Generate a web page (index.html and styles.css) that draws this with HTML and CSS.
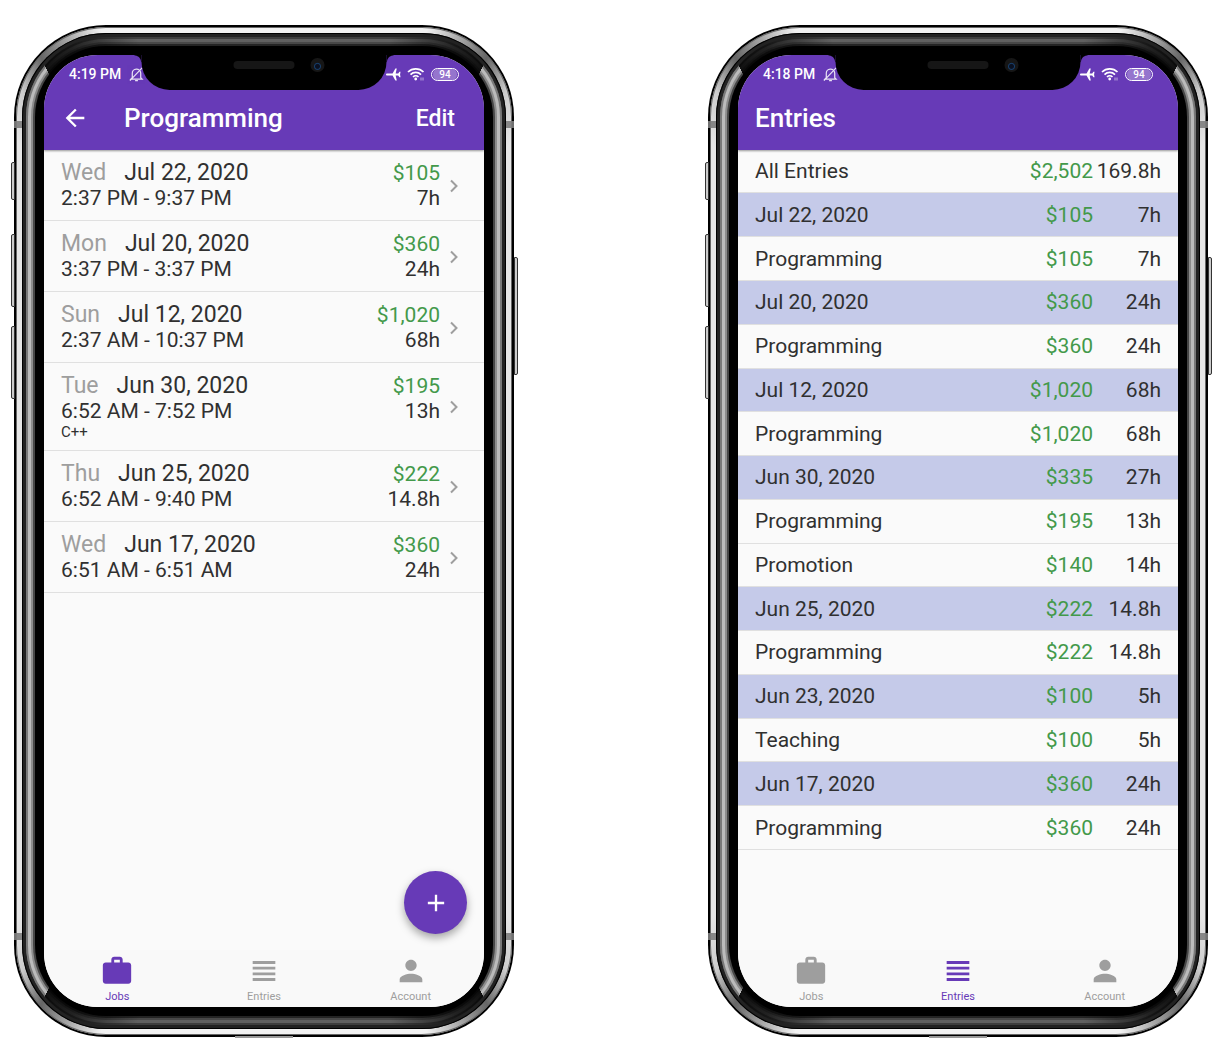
FILE: index.html
```html
<!DOCTYPE html>
<html lang="en">
<head>
<meta charset="utf-8">
<meta name="viewport" content="width=device-width, initial-scale=1">
<title>Time Tracker</title>
<link rel="stylesheet" href="styles.css">
</head>
<body>
<svg class="sprite" aria-hidden="true">
  <symbol id="bell-off" viewBox="0 0 16 16"><path d="M3.500 11.500V7a4.500 4.500 0 0 1 9-.5v5l1.500 1.500H2z M6.500 14.500h3M14 1L1 14.500" fill="none" stroke="currentColor" stroke-width="1.300"/></symbol>
  <symbol id="plane" viewBox="0 0 16 16"><path d="M0 8c0-.7.6-1.100 1.300-1.100H7L10 1.500h1.500L10.300 6.900H13l1.300-1.900h1.200L15 8l.5 3h-1.200L13 9.100h-2.700l1.200 5.400H10L7 9.100H1.300C.6 9.100 0 8.700 0 8z" fill="currentColor"/></symbol>
  <symbol id="wifi" viewBox="0 0 18 14"><path d="M1 5a11 11 0 0 1 15.500 0M3.500 7.600a7.500 7.500 0 0 1 10.500 0M6 10a4 4 0 0 1 5.500 0" fill="none" stroke="currentColor" stroke-width="1.700"/><circle cx="8.700" cy="12" r="1.400" fill="currentColor"/><path d="M14 10.500v3M16 10.500v3" stroke="currentColor" opacity=".6"/></symbol>
  <symbol id="back" viewBox="0 0 24 24"><path d="M20 11H7.830l5.590-5.590L12 4l-8 8 8 8 1.410-1.410L7.830 13H20z" fill="currentColor"/></symbol>
  <symbol id="chevron" viewBox="0 0 8 14"><path d="M1 1.500L6.500 7 1 12.500" fill="none" stroke="currentColor" stroke-width="2"/></symbol>
  <symbol id="plus" viewBox="0 0 24 24"><path d="M19 13h-6v6h-2v-6H5v-2h6V5h2v6h6z" fill="currentColor"/></symbol>
  <symbol id="work" viewBox="0 0 24 24"><path d="M20 6h-4V4c0-1.110-.89-2-2-2h-4c-1.110 0-2 .89-2 2v2H4c-1.110 0-2 .89-2 2v11c0 1.110.89 2 2 2h16c1.110 0 2-.89 2-2V8c0-1.110-.89-2-2-2zm-6 0h-4V4h4z" fill="currentColor"/></symbol>
  <symbol id="lines" viewBox="0 0 24 24"><path d="M4 15h16v-2H4zm0 4h16v-2H4zm0-8h16V9H4zm0-6v2h16V5z" fill="currentColor"/></symbol>
  <symbol id="person" viewBox="0 0 24 24"><path d="M12 12c2.210 0 4-1.790 4-4s-1.790-4-4-4-4 1.790-4 4 1.790 4 4 4zm0 2c-2.670 0-8 1.340-8 4v2h16v-2c0-2.660-5.330-4-8-4z" fill="currentColor"/></symbol>
</svg>

<main class="stage">
  <section class="phone" aria-label="Job entries">
    <span class="key key-mute"></span><span class="key key-up"></span><span class="key key-down"></span><span class="key key-power"></span><span class="port"></span>
    <div class="rim"><div class="band"><div class="glow"><div class="glass">
      <div class="notch"><span class="speaker"></span><span class="camera"></span></div>
      <div class="screen">
        <header class="top">
          <div class="status">
            <span>4:19 PM</span>
            <svg class="bell"><use href="#bell-off"/></svg>
            <svg class="plane"><use href="#plane"/></svg>
            <svg class="wifi"><use href="#wifi"/></svg>
            <span class="battery">94</span>
          </div>
          <div class="bar">
            <button class="bar-back" type="button" aria-label="Back"><svg><use href="#back"/></svg></button>
            <h1>Programming</h1>
            <button class="bar-action" type="button">Edit</button>
          </div>
        </header>
        <div class="content">
          <ul class="shifts">
            <li><a href="#"><div class="when"><p class="date"><span>Wed</span>Jul 22, 2020</p><p>2:37 PM - 9:37 PM</p></div><div class="sum"><p class="money">$105</p><p>7h</p></div><svg><use href="#chevron"/></svg></a></li>
            <li><a href="#"><div class="when"><p class="date"><span>Mon</span>Jul 20, 2020</p><p>3:37 PM - 3:37 PM</p></div><div class="sum"><p class="money">$360</p><p>24h</p></div><svg><use href="#chevron"/></svg></a></li>
            <li><a href="#"><div class="when"><p class="date"><span>Sun</span>Jul 12, 2020</p><p>2:37 AM - 10:37 PM</p></div><div class="sum"><p class="money">$1,020</p><p>68h</p></div><svg><use href="#chevron"/></svg></a></li>
            <li><a href="#"><div class="when"><p class="date"><span>Tue</span>Jun 30, 2020</p><p>6:52 AM - 7:52 PM</p><p class="note">C++</p></div><div class="sum"><p class="money">$195</p><p>13h</p></div><svg><use href="#chevron"/></svg></a></li>
            <li><a href="#"><div class="when"><p class="date"><span>Thu</span>Jun 25, 2020</p><p>6:52 AM - 9:40 PM</p></div><div class="sum"><p class="money">$222</p><p>14.8h</p></div><svg><use href="#chevron"/></svg></a></li>
            <li><a href="#"><div class="when"><p class="date"><span>Wed</span>Jun 17, 2020</p><p>6:51 AM - 6:51 AM</p></div><div class="sum"><p class="money">$360</p><p>24h</p></div><svg><use href="#chevron"/></svg></a></li>
          </ul>
          <button class="fab" type="button" aria-label="Add entry"><svg><use href="#plus"/></svg></button>
        </div>
        <nav class="tabs">
          <a class="active" href="#"><svg><use href="#work"/></svg>Jobs</a>
          <a href="#"><svg><use href="#lines"/></svg>Entries</a>
          <a href="#"><svg><use href="#person"/></svg>Account</a>
        </nav>
      </div>
    </div></div></div></div>
  </section>

  <section class="phone" aria-label="All entries">
    <span class="key key-mute"></span><span class="key key-up"></span><span class="key key-down"></span><span class="key key-power"></span><span class="port"></span>
    <div class="rim"><div class="band"><div class="glow"><div class="glass">
      <div class="notch"><span class="speaker"></span><span class="camera"></span></div>
      <div class="screen">
        <header class="top">
          <div class="status">
            <span>4:18 PM</span>
            <svg class="bell"><use href="#bell-off"/></svg>
            <svg class="plane"><use href="#plane"/></svg>
            <svg class="wifi"><use href="#wifi"/></svg>
            <span class="battery">94</span>
          </div>
          <div class="bar"><h1>Entries</h1></div>
        </header>
        <div class="content">
          <table class="totals">
            <tbody>
              <tr><th scope="row">All Entries</th><td class="money">$2,502</td><td>169.8h</td></tr>
              <tr class="day"><th scope="row">Jul 22, 2020</th><td class="money">$105</td><td>7h</td></tr>
              <tr><th scope="row">Programming</th><td class="money">$105</td><td>7h</td></tr>
              <tr class="day"><th scope="row">Jul 20, 2020</th><td class="money">$360</td><td>24h</td></tr>
              <tr><th scope="row">Programming</th><td class="money">$360</td><td>24h</td></tr>
              <tr class="day"><th scope="row">Jul 12, 2020</th><td class="money">$1,020</td><td>68h</td></tr>
              <tr><th scope="row">Programming</th><td class="money">$1,020</td><td>68h</td></tr>
              <tr class="day"><th scope="row">Jun 30, 2020</th><td class="money">$335</td><td>27h</td></tr>
              <tr><th scope="row">Programming</th><td class="money">$195</td><td>13h</td></tr>
              <tr><th scope="row">Promotion</th><td class="money">$140</td><td>14h</td></tr>
              <tr class="day"><th scope="row">Jun 25, 2020</th><td class="money">$222</td><td>14.8h</td></tr>
              <tr><th scope="row">Programming</th><td class="money">$222</td><td>14.8h</td></tr>
              <tr class="day"><th scope="row">Jun 23, 2020</th><td class="money">$100</td><td>5h</td></tr>
              <tr><th scope="row">Teaching</th><td class="money">$100</td><td>5h</td></tr>
              <tr class="day"><th scope="row">Jun 17, 2020</th><td class="money">$360</td><td>24h</td></tr>
              <tr><th scope="row">Programming</th><td class="money">$360</td><td>24h</td></tr>
            </tbody>
          </table>
        </div>
        <nav class="tabs">
          <a href="#"><svg><use href="#work"/></svg>Jobs</a>
          <a class="active" href="#"><svg><use href="#lines"/></svg>Entries</a>
          <a href="#"><svg><use href="#person"/></svg>Account</a>
        </nav>
      </div>
    </div></div></div></div>
  </section>
</main>
</body>
</html>
```
FILE: styles.css
```css
:root {
  --purple: #673ab7;
  --paper: #fafafa;
  --ink: #303030;
  --grey: #9e9e9e;
  --green: #43994a;
  --line: #e0e0e0;
}

* { box-sizing: border-box; }

body {
  margin: 0;
  background: #fff;
  color: var(--ink);
  font-family: Roboto, "Liberation Sans", sans-serif;
}

h1, p, ul { margin: 0; padding: 0; }
a { color: inherit; text-decoration: none; }
button { border: 0; padding: 0; background: none; color: inherit; font: inherit; cursor: pointer; }
svg { display: block; flex: none; }
.sprite { position: absolute; width: 0; height: 0; }

.stage {
  display: flex;
  justify-content: space-between;
  align-items: flex-start;
  gap: 40px;
  padding: 25px 8px 17px 14px;
}

/* Phone body: concentric rings from the steel rim to the glass */
.phone {
  position: relative;
  flex: 0 1 500px;
  display: grid;
  aspect-ratio: 500 / 1012;
  padding: 2px;
  border-radius: 92px;
  background: #000;
}

.rim, .band, .glow, .glass { display: grid; min-width: 0; }

.rim {
  padding: 6px;
  border-radius: 90px;
  background: conic-gradient(#f2f2f2 0 5%, #aaa 6%, #666 7%, #ccc 8%, #e6e6e6 9% 41%, #ccc 42%, #666 43%, #aaa 44%, #f2f2f2 45% 55%, #aaa 56%, #666 57%, #ccc 58%, #e6e6e6 59% 91%, #ccc 92%, #666 93%, #aaa 94%, #f2f2f2 95%);
  box-shadow: inset 0 0 0 1px #666;
}

.band {
  padding: 4px;
  border-radius: 84px;
  background: #222;
  box-shadow: inset 0 0 0 1px #000;
}

.glow {
  padding: 9px;
  border-radius: 80px;
  background: conic-gradient(#606060 0 4%, #222 6%, #111 7%, #bbb 7% 43%, #111 43%, #222 44%, #606060 46% 54%, #222 56%, #111 57%, #bbb 57% 93%, #111 93%, #222 94%, #606060 96%);
  box-shadow: inset 0 0 0 2px rgba(0, 0, 0, .35);
}

.glass {
  position: relative;
  padding: 9px;
  border-radius: 71px;
  background: #000;
  box-shadow: 0 0 0 2px rgba(0, 0, 0, .5), 0 0 0 4px rgba(0, 0, 0, .25);
}

.screen {
  display: flex;
  flex-direction: column;
  min-width: 0;
  overflow: hidden;
  border-radius: 54px;
  background: var(--paper);
}

/* Antenna breaks */
.phone::before, .phone::after {
  content: "";
  position: absolute;
  left: 0;
  right: 0;
  height: 7px;
  border: solid rgba(125, 125, 125, .9);
  border-width: 0 8px;
}
.phone::before { top: 96px; }
.phone::after { bottom: 97px; }

.key {
  position: absolute;
  width: 4px;
  border: 1px solid #333;
  background: #ccc;
}
.key-mute, .key-up, .key-down { left: -3px; border-radius: 2px 0 0 2px; }
.key-mute { top: 137px; height: 38px; }
.key-up { top: 209px; height: 73px; }
.key-down { top: 301px; height: 73px; }
.key-power { right: -4px; top: 232px; height: 118px; border-radius: 0 2px 2px 0; }

.port {
  position: absolute;
  bottom: -1px;
  left: 50%;
  width: 58px;
  height: 2px;
  margin-left: -29px;
  background: #999;
}

.notch {
  position: absolute;
  z-index: 1;
  top: 0;
  left: 50%;
  width: 245px;
  height: 44px;
  transform: translateX(-50%);
  border-radius: 0 0 28px 28px;
  background: #000;
}
.notch::before, .notch::after {
  content: "";
  position: absolute;
  top: 9px;
  width: 7px;
  height: 7px;
}
.notch::before { right: 100%; background: radial-gradient(circle at 0 100%, transparent 6px, #000 7px); }
.notch::after { left: 100%; background: radial-gradient(circle at 100% 100%, transparent 6px, #000 7px); }

.speaker {
  position: absolute;
  top: 15px;
  left: 92px;
  width: 61px;
  height: 8px;
  border-radius: 4px;
  background: #161616;
}
.camera {
  position: absolute;
  top: 12px;
  left: 169px;
  width: 14px;
  height: 14px;
  border-radius: 50%;
  background: radial-gradient(circle at 50% 60%, #0a1020 0 2px, #163d6a 3px, #161616 4px);
}

/* App header */
.top { background: var(--purple); color: #fff; box-shadow: 0 1px 2px rgba(0, 0, 0, .4); position: relative; }

.status {
  display: flex;
  align-items: center;
  height: 38px;
  padding: 0 25px;
  font-size: 14px;
  font-weight: 500;
}
.bell { width: 15px; height: 15px; margin-left: 8px; opacity: .85; }
.plane { width: 15px; height: 15px; margin-left: auto; }
.wifi { width: 18px; height: 14px; margin: 0 6px; }
.battery {
  width: 28px;
  height: 13px;
  padding: 0 1px;
  border: 1px solid #fff;
  border-radius: 7px;
  background: #9575cd content-box;
  font-size: 10px;
  line-height: 11px;
  text-align: center;
}

.bar {
  display: flex;
  align-items: center;
  height: 57px;
  padding: 0 29px 7px 17px;
}
.bar h1 { font-size: 26px; font-weight: 500; line-height: 32px; }
.bar-back { width: 63px; }
.bar-back svg { width: 28px; height: 28px; }
.bar-action { margin-left: auto; font-size: 23px; font-weight: 500; }

.content { position: relative; flex: 1; }
.money { color: var(--green); }

/* Job entries */
.shifts { list-style: none; font-size: 21px; line-height: 25px; }
.shifts li { border-bottom: 1px solid var(--line); }
.shifts a { display: flex; padding: 10px 26px 9px 17px; }
.shifts svg { align-self: center; width: 8px; height: 14px; margin-left: 10px; color: var(--grey); }
.shifts .money, .date { line-height: 26px; }
.when { flex: 1; min-width: 0; }
.date { font-size: 23px; }
.date span { margin-right: 18px; color: var(--grey); }
.shifts .note { font-size: 15px; line-height: 17px; }
.sum { text-align: right; }

.fab {
  position: absolute;
  right: 17px;
  bottom: 16px;
  display: grid;
  place-items: center;
  width: 63px;
  height: 63px;
  border-radius: 50%;
  background: var(--purple);
  color: #fff;
  box-shadow: 0 4px 8px rgba(0, 0, 0, .35);
}
.fab svg { width: 28px; height: 28px; }

/* All entries */
.totals {
  width: 100%;
  height: 700px;
  border-collapse: collapse;
  font-size: 21px;
  line-height: 26px;
}
.totals th, .totals td { padding: 0; border-bottom: 1px solid var(--line); text-align: right; }
.totals th { padding-left: 17px; font-weight: 400; text-align: left; }
.totals td:last-child { width: 85px; padding-right: 17px; }
.day { background: #c5cae9; }

.tabs {
  display: grid;
  grid-template-columns: repeat(3, 1fr);
  height: 57px;
  background: #f9f9f9;
  color: var(--grey);
  font-size: 11px;
  line-height: 14px;
}
.tabs a { display: flex; flex-direction: column; align-items: center; gap: 2px; padding-top: 4px; }
.tabs svg { width: 34px; height: 34px; }
.tabs .active { color: var(--purple); }
```
